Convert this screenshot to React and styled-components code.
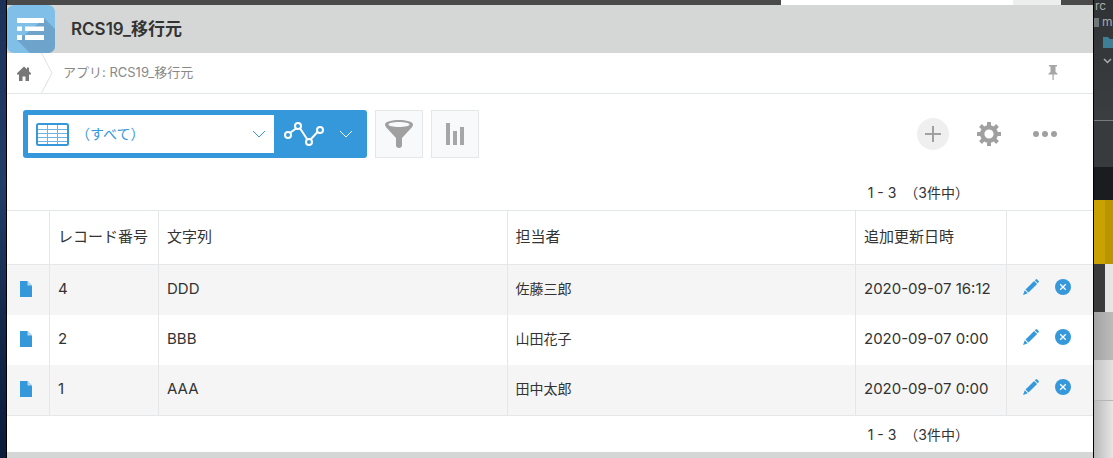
import React, { useState } from 'react';
import styled, { createGlobalStyle } from 'styled-components';

const records = [
  { no: 4, text: 'DDD', user: '佐藤三郎', updated: '2020-09-07 16:12' },
  { no: 2, text: 'BBB', user: '山田花子', updated: '2020-09-07 0:00' },
  { no: 1, text: 'AAA', user: '田中太郎', updated: '2020-09-07 0:00' },
];

const GlobalStyle = createGlobalStyle`
  * {
    box-sizing: border-box;
  }
  body {
    margin: 0;
    color: #333;
    font-family: Inter, 'Noto Sans CJK JP', sans-serif;
    font-size: 14px;
    line-height: 20px;
  }
  button {
    display: flex;
    align-items: center;
    justify-content: center;
    padding: 0;
    border: none;
    background: none;
    cursor: pointer;
  }
  svg {
    display: block;
    flex: none;
  }
`;

const Desktop = styled.div`
  display: flex;
  min-height: 100vh;
  background: linear-gradient(#1c3158, #223d68 40%, #14284c 70%, #0b1c3b);
`;

const Window = styled.div`
  flex: 1;
  min-width: 0;
  margin-left: 6px;
  display: flex;
  flex-direction: column;
  border-left: 1px solid #000;
  border-right: 1px solid #000;
  background: #fff;
`;

const TopBar = styled.div`
  height: 5px;
  display: flex;
  justify-content: flex-end;
  padding-right: 32px;
  background: #4a4a4a;
`;

const SearchBox = styled.div`
  width: ${(props) => props.$width};
  background: ${(props) => props.$color};
`;

const AppHeader = styled.header`
  display: flex;
  align-items: center;
  gap: 16px;
  height: 48px;
  background: #d5d7d6;
`;

const AppTitle = styled.h1`
  margin: 0;
  font-size: 17px;
  font-weight: 600;
  line-height: 24px;
`;

const Breadcrumb = styled.nav`
  display: flex;
  align-items: center;
  height: 41px;
  padding-right: 32px;
  border-bottom: 1px solid #e3e7e8;
  font-size: 13px;
`;

const HomeLink = styled.a`
  display: flex;
  padding: 0 10px;
`;

const AppLink = styled.a`
  flex: 1;
  padding-left: 10px;
  padding-bottom: 2px;
  color: #888;
  text-decoration: none;
`;

const PinButton = styled.button`
  width: 16px;
  height: 20px;
`;

const ToolbarWrap = styled.div`
  display: flex;
  align-items: center;
  justify-content: space-between;
  padding: 16px 32px 16px 16px;
`;

const ToolGroup = styled.div`
  display: flex;
  align-items: center;
  gap: ${(props) => props.$gap};
`;

const ViewSwitch = styled.div`
  display: flex;
  height: 48px;
  padding: 5px 0 5px 5px;
  border-radius: 3px;
  background: #3498db;
`;

const ViewLabel = styled.label`
  display: grid;
  grid-template-columns: 34px 1fr 14px;
  align-items: center;
  gap: 6px;
  width: 246px;
  padding: 0 8px;
  background: #fff;
`;

const ViewSelect = styled.select`
  appearance: none;
  min-width: 0;
  padding: 0;
  border: none;
  background: none;
  color: #3498db;
  font: inherit;
`;

const GraphButton = styled.button`
  gap: 15px;
  width: 93px;
  && {
    padding-right: 5px;
  }
`;

const SquareButton = styled.button`
  width: 48px;
  height: 48px;
  && {
    border: 1px solid #e3e7e8;
    background: #f7f9fa;
  }
`;

const RoundButton = styled.button`
  width: 32px;
  height: 32px;
  border-radius: 50%;
  && {
    background: ${(props) => (props.$filled ? '#efefef' : 'none')};
  }
`;

const PagerWrap = styled.div`
  display: flex;
  justify-content: flex-end;
  gap: 8px;
  padding: 9px 124px 7px 0;
`;

const Table = styled.table`
  width: 100%;
  border-collapse: separate;
  border-spacing: 0;
  table-layout: fixed;
  border-top: 1px solid #e3e7e8;
  border-bottom: 1px solid #e3e7e8;
`;

const HeadCell = styled.th`
  width: ${(props) => props.$width};
  height: 54px;
  padding: 0 0 2px 8px;
  border-right: 1px solid #e3e7e8;
  border-bottom: 1px solid #e3e7e8;
  font-size: 15px;
  font-weight: 400;
  text-align: left;
  white-space: nowrap;
  &:last-child {
    border-right: none;
  }
`;

const Row = styled.tr`
  &:nth-child(odd) {
    background: #f5f5f5;
  }
`;

const Cell = styled.td`
  height: 50px;
  padding: 0 0 2px 8px;
  border-right: 1px solid #e3e7e8;
  font-size: ${(props) => (props.$name ? '14px' : '15px')};
  white-space: nowrap;
  &:last-child {
    border-right: none;
  }
`;

const DetailLink = styled.a`
  display: flex;
  padding-left: 5px;
`;

const Actions = styled.div`
  display: flex;
  gap: 16px;
  padding-left: 8px;
  padding-bottom: 4px;
`;

const Footer = styled.footer`
  flex: 1;
  min-height: 6px;
  background: #d5d7d6;
`;

const BackWindow = styled.aside`
  width: 19px;
  display: flex;
  flex-direction: column;
  overflow: hidden;
  background: #323538;
`;

const FileTree = styled.div`
  height: 121px;
  display: flex;
  flex-direction: column;
  border-bottom: 1px solid #777a7c;
  color: #a9abac;
  font-size: 12px;
  line-height: 12px;
  background: linear-gradient(#303335, #3b3e40);
`;

const TreeRow = styled.div`
  display: flex;
  align-items: center;
  gap: 3px;
  height: ${(props) => props.$height};
  padding-left: ${(props) => props.$indent};
`;

const TreeBlock = styled.span`
  flex: none;
  width: 5px;
  height: 9px;
  background: #6f777a;
`;

const Band = styled.div`
  height: ${(props) => props.$height};
  flex: ${(props) => (props.$height ? 'none' : 1)};
  background: ${(props) => props.$color};
`;

const LogoIcon = () => (
  <svg width='48' height='48' viewBox='0 0 48 48'>
    <defs>
      <clipPath id='logoClip'>
        <rect width='48' height='48' rx='7' />
      </clipPath>
    </defs>
    <g clipPath='url(#logoClip)'>
      <rect width='48' height='48' fill='#7fbfe8' />
      <path d='M37 13L48 24V48H23L10 35L32 18Z' fill='#6ea4cc' />
      <path d='M15 17h17L18 30h-3z' fill='#7fbfe8' />
    </g>
    <path
      d='M10 13h27v5H10zM10 21.500h5v4.500h-5zM18 21.500h19v4.500H18zM10 30h5v5h-5zM18 30h19v5H18z'
      fill='#fff'
    />
  </svg>
);

const HomeIcon = () => (
  <svg width='14' height='15' viewBox='0 0 14 15' fill='#777'>
    <path d='M7 .5L10 3.300V1.500h2v3.700L14 7.200V8.500H12V15H8.500V10.500H5.500V15H2V8.500H0V7.200Z' />
  </svg>
);

const SeparatorIcon = () => (
  <svg width='12' height='40' viewBox='0 0 12 40' fill='none'>
    <path d='M.5 0L11 20L.5 40' stroke='#dde1e2' />
  </svg>
);

const PinIcon = () => (
  <svg width='10' height='16' viewBox='0 0 10 16' fill='#a6a6a6'>
    <path d='M1 0h8v1.500H7.500V7L9.500 8.500V9.500H5.700V15H4.500V9.500H.5V8.500L2.500 7V1.500H1z' />
  </svg>
);

const ListIcon = () => (
  <svg width='33' height='23' viewBox='0 0 33 23' fill='none' stroke='#3498db'>
    <rect x='1' y='1' width='31' height='21' rx='1.500' strokeWidth='2' />
    <path
      d='M2 6.500h29M2 10.500h29M2 14.500h29M2 18.500h29M11.500 2v19M21.500 2v19'
      stroke='#6db4e4'
    />
  </svg>
);

const ChevronIcon = ({ color }) => (
  <svg width='14' height='8' viewBox='0 0 14 8' fill='none'>
    <path d='M1 1l6 6l6-6' stroke={color} strokeWidth='1' />
  </svg>
);

const GraphIcon = () => (
  <svg width='40' height='24' viewBox='0 0 40 24' fill='none' stroke='#fff' strokeWidth='2'>
    <path d='M6.500 10.500L12 6.500M16.500 7L23 17M27 17L33.500 10' />
    <circle cx='4' cy='13' r='3' />
    <circle cx='14' cy='4' r='3' />
    <circle cx='25' cy='20' r='3' />
    <circle cx='36' cy='8' r='3' />
  </svg>
);

const FilterIcon = () => (
  <svg width='28' height='28' viewBox='0 0 28 28' fill='#a0a0a0'>
    <path
      fillRule='evenodd'
      d='M14 0C21 0 28 1.500 28 4.500C28 6 27 7.200 26 8.300L17 18V25.500C17 28.700 11 28.700 11 25.500V18L2 8.300C1 7.200 0 6 0 4.500C0 1.500 7 0 14 0ZM14 2C8 2 3.500 3 3.500 4.500S8 7 14 7S24.500 6 24.500 4.500S20 2 14 2Z'
    />
  </svg>
);

const BarsIcon = () => (
  <svg width='18' height='22' viewBox='0 0 18 22' fill='#a6a6a6'>
    <path d='M0 0h4v22H0zM7 8h4v14H7zM14 4h4v18h-4z' />
  </svg>
);

const PlusIcon = () => (
  <svg width='16' height='16' viewBox='0 0 16 16' stroke='#a0a0a0' strokeWidth='2'>
    <path d='M8 0v16M0 8h16' />
  </svg>
);

const GearIcon = () => (
  <svg width='24' height='24' viewBox='0 0 24 24' fill='none' stroke='#a0a0a0'>
    <circle cx='12' cy='12' r='6.800' strokeWidth='4.400' />
    <path
      d='M12 0v4M12 20v4M0 12h4M20 12h4M3.500 3.500l2.800 2.800M17.700 17.700l2.800 2.800M3.500 20.500l2.800-2.800M17.700 6.300l2.800-2.800'
      strokeWidth='4'
    />
  </svg>
);

const DotsIcon = () => (
  <svg width='24' height='6' viewBox='0 0 24 6' fill='#a0a0a0'>
    <circle cx='3' cy='3' r='3' />
    <circle cx='12' cy='3' r='3' />
    <circle cx='21' cy='3' r='3' />
  </svg>
);

const FileIcon = () => (
  <svg width='12' height='16' viewBox='0 0 12 16'>
    <path d='M0 0h7.500L12 4.500V16H0z' fill='#3498db' />
    <path d='M7.500 0v4.500H12z' fill='#b4d9f1' />
  </svg>
);

const PencilIcon = () => (
  <svg width='16' height='16' viewBox='0 0 16 16' fill='#3498db'>
    <path d='M12.700.4Q13.500-.2 14.200.5L15.600 1.900Q16.200 2.600 15.600 3.300L14.700 4.200L11.800 1.300ZM11.100 1.900L14.100 4.900L5.500 13.500L2.500 10.500ZM1.800 11.200L4.800 14.200L0 16Z' />
  </svg>
);

const DeleteIcon = () => (
  <svg width='16' height='16' viewBox='0 0 16 16'>
    <circle cx='8' cy='8' r='8' fill='#3498db' />
    <path d='M5.200 5.200l5.600 5.600M10.800 5.200l-5.600 5.600' stroke='#fff' strokeWidth='1.300' />
  </svg>
);

const Pager = ({ count }) => (
  <PagerWrap>
    <span>1 - {count}</span>
    <span>（{count}件中）</span>
  </PagerWrap>
);

function App() {
  const [view, setView] = useState('all');
  const [rows, setRows] = useState(records);

  const handleDelete = (no) => {
    setRows(rows.filter((row) => row.no !== no));
  };

  return (
    <Desktop>
      <GlobalStyle />
      <Window>
        <TopBar>
          <SearchBox $width='232px' $color='#fff' />
          <SearchBox $width='48px' $color='#eceeed' />
        </TopBar>
        <AppHeader>
          <LogoIcon />
          <AppTitle>RCS19_移行元</AppTitle>
        </AppHeader>
        <Breadcrumb>
          <HomeLink href='#home' aria-label='ホーム'>
            <HomeIcon />
          </HomeLink>
          <SeparatorIcon />
          <AppLink href='#app'>アプリ: RCS19_移行元</AppLink>
          <PinButton aria-label='ピン留め'>
            <PinIcon />
          </PinButton>
        </Breadcrumb>
        <ToolbarWrap>
          <ToolGroup $gap='8px'>
            <ViewSwitch>
              <ViewLabel>
                <ListIcon />
                <ViewSelect
                  aria-label='一覧'
                  value={view}
                  onChange={(e) => setView(e.target.value)}
                >
                  <option value='all'>（すべて）</option>
                </ViewSelect>
                <ChevronIcon color='#3498db' />
              </ViewLabel>
              <GraphButton aria-label='グラフ'>
                <GraphIcon />
                <ChevronIcon color='#fff' />
              </GraphButton>
            </ViewSwitch>
            <SquareButton aria-label='絞り込む'>
              <FilterIcon />
            </SquareButton>
            <SquareButton aria-label='集計'>
              <BarsIcon />
            </SquareButton>
          </ToolGroup>
          <ToolGroup $gap='24px'>
            <RoundButton $filled aria-label='追加'>
              <PlusIcon />
            </RoundButton>
            <RoundButton aria-label='設定'>
              <GearIcon />
            </RoundButton>
            <RoundButton aria-label='オプション'>
              <DotsIcon />
            </RoundButton>
          </ToolGroup>
        </ToolbarWrap>
        <Pager count={rows.length} />
        <Table>
          <thead>
            <tr>
              <HeadCell $width='43px' />
              <HeadCell $width='109px'>レコード番号</HeadCell>
              <HeadCell>文字列</HeadCell>
              <HeadCell>担当者</HeadCell>
              <HeadCell $width='151px'>追加更新日時</HeadCell>
              <HeadCell $width='86px' />
            </tr>
          </thead>
          <tbody>
            {rows.map((row) => (
              <Row key={row.no}>
                <Cell>
                  <DetailLink href={`#record=${row.no}`} aria-label='詳細'>
                    <FileIcon />
                  </DetailLink>
                </Cell>
                <Cell>{row.no}</Cell>
                <Cell>{row.text}</Cell>
                <Cell $name>{row.user}</Cell>
                <Cell>{row.updated}</Cell>
                <Cell>
                  <Actions>
                    <button aria-label='編集'>
                      <PencilIcon />
                    </button>
                    <button aria-label='削除' onClick={() => handleDelete(row.no)}>
                      <DeleteIcon />
                    </button>
                  </Actions>
                </Cell>
              </Row>
            ))}
          </tbody>
        </Table>
        <Pager count={rows.length} />
        <Footer />
      </Window>
      <BackWindow>
        <FileTree>
          <TreeRow $height='12px' $indent='1px'>
            rc
          </TreeRow>
          <TreeRow $height='20px' $indent='0'>
            <TreeBlock />m
          </TreeRow>
          <TreeRow $height='20px' $indent='9px'>
            <svg width='10' height='11' viewBox='0 0 10 11'>
              <path d='M0 0h5l2 2h3v9H0z' fill='#3d7f95' />
            </svg>
          </TreeRow>
          <TreeRow $height='18px' $indent='9px'>
            <svg width='9' height='6' viewBox='0 0 9 6' fill='none'>
              <path d='M1 1l3.500 3.500L8 1' stroke='#a9abac' strokeWidth='1.500' />
            </svg>
          </TreeRow>
        </FileTree>
        <Band $height='46px' $color='#373b3e' />
        <Band $height='33px' $color='#1b1c20' />
        <Band $height='64px' $color='linear-gradient(90deg, #c9a202 11px, #ba9500 11px)' />
        <Band $height='48px' $color='linear-gradient(90deg, #3b3b3b 11px, #e6e6e6 11px)' />
        <Band $height='48px' $color='linear-gradient(90deg, #a3a3a3, #bcbcbc)' />
        <Band $height='40px' $color='linear-gradient(90deg, #c4c4c4, #e2e2e2)' />
        <Band $height='1px' $color='#b5b5b5' />
        <Band $color='linear-gradient(90deg, #b9b9b9, #e6e6e6)' />
      </BackWindow>
    </Desktop>
  );
}

export default App;
